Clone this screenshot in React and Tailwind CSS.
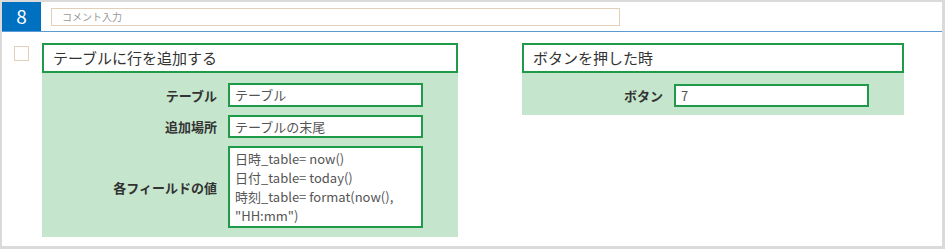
const FONT = "font-['Noto_Sans_CJK_JP','Noto_Sans',sans-serif]";

const Field = ({ label, labelWidth, children }) => (
  <div className="flex items-center">
    <div
      className={`shrink-0 text-right text-[13px] font-bold text-[#333] leading-none pr-[11px] ${labelWidth}`}
    >
      {label}
    </div>
    {children}
  </div>
);

const Box = ({ children, className = "" }) => (
  <div
    className={`w-[195px] border-2 border-[#1f9a48] bg-white text-[13px] text-[#555] pl-[5px] ${className}`}
  >
    {children}
  </div>
);

export default function App() {
  return (
    <div
      className={`w-[945px] h-[249px] bg-white border-t-2 border-l-2 border-r-[3px] border-b-[3px] border-[#dadada] ${FONT} overflow-hidden`}
    >
      {/* header row */}
      <div className="flex items-center h-[30px] border-b border-b-[#5b9bd5]">
        <div className="w-[39px] h-[29px] bg-[#0070c0] text-white text-[19px] flex items-center justify-center self-start">
          8
        </div>
        <div className="ml-[10px] w-[569px] h-[18px] border border-[#e2cfb8] flex items-center pl-[10px] text-[10px] text-[#999]">
          コメント入力
        </div>
      </div>

      {/* body */}
      <div className="flex items-start pt-[11px]">
        <div className="ml-[12px] mt-[3px] w-[15px] h-[15px] border border-[#e2cfb8]" />

        {/* left card */}
        <div className="ml-[13px] w-[416px]">
          <div className="h-[30px] border-2 border-[#1f9a48] flex items-center pl-[9px] text-[15px] text-[#333]">
            テーブルに行を追加する
          </div>
          <div className="bg-[#c5e6cd] pt-[10px] pb-[9px] flex flex-col gap-[8px]">
            <Field label="テーブル" labelWidth="w-[186px]">
              <Box className="h-[24px] flex items-center">テーブル</Box>
            </Field>
            <Field label="追加場所" labelWidth="w-[186px]">
              <Box className="h-[23px] flex items-center">テーブルの末尾</Box>
            </Field>
            <Field label="各フィールドの値" labelWidth="w-[186px]">
              <Box className="h-[82px] pt-[1px] leading-[19px]">
                <div>日時_table= now()</div>
                <div>日付_table= today()</div>
                <div>時刻_table= format(now(),</div>
                <div>"HH:mm")</div>
              </Box>
            </Field>
          </div>
        </div>

        {/* right card */}
        <div className="ml-[64px] w-[382px]">
          <div className="h-[30px] border-2 border-[#1f9a48] flex items-center pl-[9px] text-[15px] text-[#333]">
            ボタンを押した時
          </div>
          <div className="bg-[#c5e6cd] pt-[11px] pb-[8px] flex flex-col">
            <Field label="ボタン" labelWidth="w-[152px]">
              <Box className="h-[23px] flex items-center">7</Box>
            </Field>
          </div>
        </div>
      </div>
    </div>
  );
}
